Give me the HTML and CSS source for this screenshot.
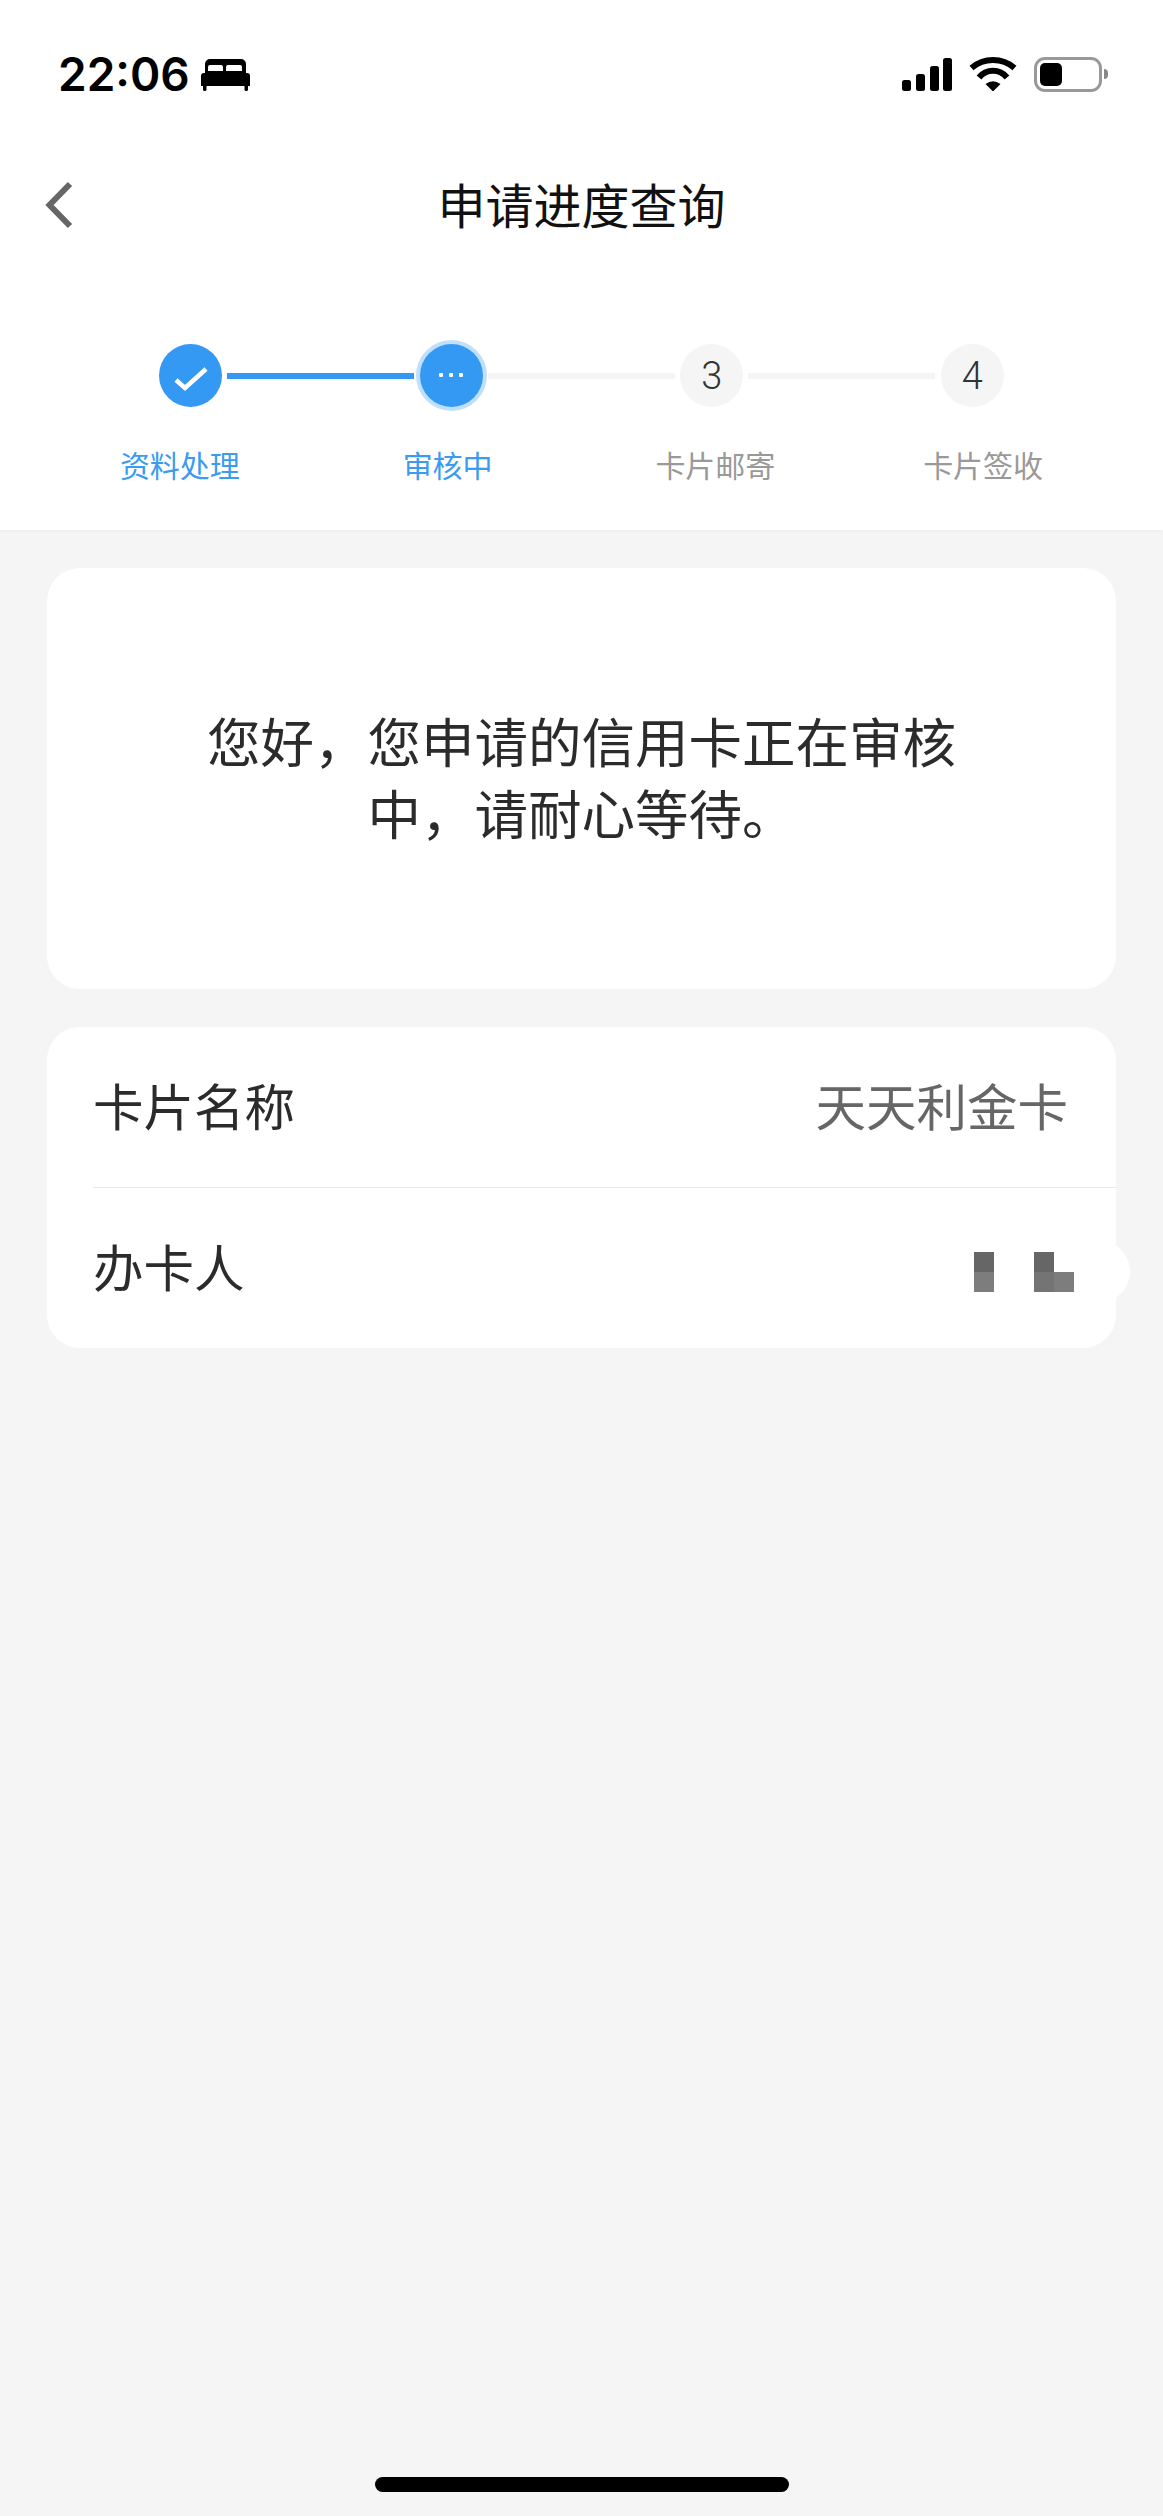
FILE: index.html
```html
<!DOCTYPE html>
<html lang="zh-CN">
<head>
  <meta charset="UTF-8">
  <title>申请进度查询</title>
  <link rel="stylesheet" href="styles.css">
</head>
<body>
  <header class="top">
    <div class="status-bar">
      <div class="status-left">
        <span class="time">22:06</span>
        <svg class="bed" viewBox="0 0 49 33">
          <path fill-rule="evenodd" d="M9 1H40A5 5 0 0 1 45 6V15H46A3 3 0 0 1 49 18V28H47V31.500A1.500 1.500 0 0 1 45.500 33H45A1.500 1.500 0 0 1 43.500 31.500V28H5.500V31.500A1.500 1.500 0 0 1 4 33H3.500A1.500 1.500 0 0 1 2 31.500V28H0V18A3 3 0 0 1 3 15H4V6A5 5 0 0 1 9 1ZM9 7A2 2 0 0 0 7 9V13H22V9A2 2 0 0 0 20 7ZM27 7A2 2 0 0 0 25 9V13H41V9A2 2 0 0 0 39 7Z"/>
        </svg>
      </div>
      <div class="status-right">
        <svg class="signal" viewBox="0 0 50 33">
          <rect x="0" y="22" width="9" height="11" rx="2.500"/>
          <rect x="14" y="16" width="9" height="17" rx="2.500"/>
          <rect x="28" y="8" width="9" height="25" rx="2.500"/>
          <rect x="41" y="0" width="9" height="33" rx="2.500"/>
        </svg>
        <svg class="wifi" viewBox="0 0 48 34">
          <path class="wifi-arc" d="M2.500 11A33 33 0 0 1 45.500 11"/>
          <path class="wifi-arc" d="M10 20.500A18 18 0 0 1 38 20.500"/>
          <path d="M16.500 27Q24 21.500 31.500 27L24 34.500Z"/>
        </svg>
        <div class="battery-wrap">
          <div class="battery"><div class="battery-fill"></div></div>
          <div class="battery-nub"></div>
        </div>
      </div>
    </div>

    <nav class="nav-bar">
      <div class="nav-side">
        <svg class="back" viewBox="0 0 28 48">
          <path d="M25 3L4.500 24L25 45"/>
        </svg>
      </div>
      <h1 class="nav-title">申请进度查询</h1>
      <div class="nav-side"></div>
    </nav>

    <div class="steps">
      <div class="step-dot active">
        <svg class="check" viewBox="0 0 63 63">
          <path d="M17 36L26 44L47 25"/>
        </svg>
      </div>
      <div class="step-line done"></div>
      <div class="step-dot active current">
        <span class="dot"></span><span class="dot"></span><span class="dot"></span>
      </div>
      <div class="step-line"></div>
      <div class="step-dot">3</div>
      <div class="step-line"></div>
      <div class="step-dot">4</div>
    </div>

    <div class="step-labels">
      <span class="on">资料处理</span>
      <span class="on">审核中</span>
      <span>卡片邮寄</span>
      <span>卡片签收</span>
    </div>
  </header>

  <main class="content">
    <section class="card message">
      <p>您好&#65292;您申请的信用卡正在审核中&#65292;请耐心等待。</p>
    </section>

    <section class="card info">
      <div class="info-row">
        <span class="info-label">卡片名称</span>
        <span class="info-value">天天利金卡</span>
      </div>
      <div class="info-line"></div>
      <div class="info-row">
        <span class="info-label">办卡人</span>
        <div class="mosaic">
          <i class="m1 c1"></i>
          <i class="m2 c3"></i>
          <i class="m3 c1"></i>
          <i class="m4 c2"></i>
          <i class="m5 c3"></i>
        </div>
      </div>
      <div class="blob"></div>
    </section>
  </main>

  <div class="home-bar"></div>
</body>
</html>
```

FILE: styles.css
```css
body {
  display: flex;
  flex-direction: column;
  min-height: 100vh;
  margin: 0;
  background-color: #f5f5f5;
  font-family: 'Noto Sans CJK SC', 'Noto Sans', sans-serif;
  color: #333;
}

.top {
  height: 530px;
  background-color: #fff;
  box-shadow: 0 1px 4px rgba(0, 0, 0, 0.04);
}

/* status bar */
.status-bar {
  display: flex;
  justify-content: space-between;
  align-items: center;
  height: 148px;
  padding: 0 55px 0 58px;
  box-sizing: border-box;
}

.status-left {
  display: flex;
  align-items: center;
  gap: 11px;
}

.time {
  font-family: Inter, sans-serif;
  font-size: 46px;
  font-weight: 600;
  line-height: 48px;
  color: #000;
}

.bed {
  width: 49px;
  height: 33px;
}

.status-right {
  display: flex;
  align-items: center;
  gap: 17px;
}

.signal {
  width: 50px;
  height: 33px;
}

.wifi {
  width: 48px;
  height: 34px;
}

.wifi-arc {
  fill: none;
  stroke: #000;
  stroke-width: 6;
}

.battery-wrap {
  display: flex;
  align-items: center;
  gap: 2px;
}

.battery {
  width: 68px;
  height: 35px;
  box-sizing: border-box;
  padding: 3px;
  border: 3px solid #999;
  border-radius: 11px;
}

.battery-fill {
  width: 22px;
  height: 23px;
  background-color: #000;
  border-radius: 5px;
}

.battery-nub {
  width: 4px;
  height: 10px;
  background-color: #888;
  border-radius: 0 5px 5px 0;
}

/* nav */
.nav-bar {
  display: grid;
  grid-template-columns: 1fr auto 1fr;
  align-items: center;
  height: 114px;
  padding: 0 45px;
}

.nav-side {
  display: flex;
}

.back {
  width: 28px;
  height: 48px;
}

.back path {
  fill: none;
  stroke: #666;
  stroke-width: 6;
}

.nav-title {
  margin: 0 0 5px;
  font-size: 48px;
  font-weight: 400;
  line-height: 64px;
  color: #111;
}

/* steps */
.steps {
  display: flex;
  align-items: center;
  padding: 82px 0 0 159px;
}

.step-dot {
  display: flex;
  justify-content: center;
  align-items: center;
  gap: 6px;
  flex: none;
  width: 63px;
  height: 63px;
  border-radius: 50%;
  background-color: #f5f5f5;
  font-family: Roboto, sans-serif;
  font-size: 38px;
  font-weight: 300;
  color: #333;
}

.step-dot.active {
  background-color: #3399f3;
}

.step-dot.current {
  box-shadow: 0 0 0 4px #bfdffb;
}

.check {
  width: 63px;
  height: 63px;
}

.check path {
  fill: none;
  stroke: #fff;
  stroke-width: 4.500;
}

.dot {
  width: 4px;
  height: 4px;
  margin-bottom: 2px;
  background-color: #fff;
  border-radius: 1px;
}

.step-line {
  flex: none;
  width: 187px;
  height: 6px;
  margin: 0 5.300px;
  background-color: #f5f5f5;
}

.step-line.done {
  background-color: #3399f3;
}

.step-labels {
  display: grid;
  grid-template-columns: repeat(4, 1fr);
  margin-top: 37px;
  padding: 0 46px;
  font-size: 30px;
  line-height: 40px;
  text-align: center;
  color: #999;
}

.step-labels .on {
  color: #3a9bf0;
}

/* cards */
.content {
  display: flex;
  flex-direction: column;
  gap: 38px;
  padding: 38px 47px 0;
}

.card {
  position: relative;
  background-color: #fff;
  border-radius: 33px;
}

.message {
  display: flex;
  justify-content: center;
  align-items: center;
  height: 421px;
}

.message p {
  max-width: 780px;
  margin: 0 0 6px;
  font-size: 53.500px;
  line-height: 72px;
  text-align: center;
  color: #2b2b2b;
}

.info-row {
  position: relative;
  z-index: 1;
  display: flex;
  justify-content: space-between;
  align-items: center;
  height: 160px;
  padding: 0 48px 0 46px;
}

.info-line {
  height: 1px;
  margin-left: 46px;
  background-color: #e8e8e8;
}

.info-label {
  margin-bottom: 6px;
  font-size: 50.500px;
  line-height: 60px;
  color: #2b2b2b;
}

.info-value {
  margin-bottom: 6px;
  font-size: 50.500px;
  line-height: 60px;
  color: #666;
}

.mosaic {
  display: grid;
  grid-template-columns: repeat(5, 20px);
  grid-template-rows: repeat(2, 20px);
  margin: 7px -6px 0 0;
}

.mosaic .m1 { grid-area: 1 / 1; }
.mosaic .m2 { grid-area: 2 / 1; }
.mosaic .m3 { grid-area: 1 / 4; }
.mosaic .m4 { grid-area: 2 / 4; }
.mosaic .m5 { grid-area: 2 / 5; }

.c1 { background-color: #666; }
.c2 { background-color: #747474; }
.c3 { background-color: #7d7d7d; }

/* white patch left over the masked name */
.blob {
  position: absolute;
  top: 213px;
  right: -14px;
  width: 150px;
  height: 63px;
  background-color: #fff;
  border-radius: 32px;
}

.home-bar {
  flex: none;
  width: 414px;
  height: 15px;
  margin: auto auto 24px;
  background-color: #000;
  border-radius: 8px;
}
```
